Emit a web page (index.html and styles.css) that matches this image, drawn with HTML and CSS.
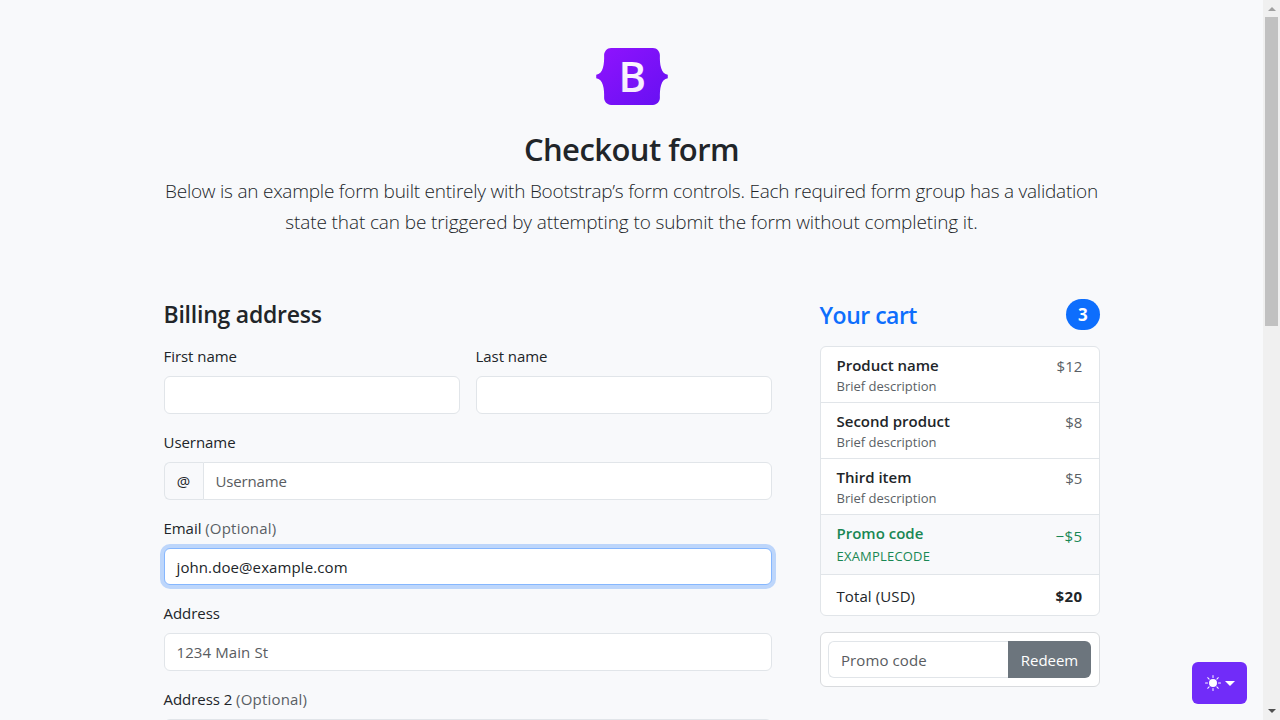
FILE: index.html
```html
<!DOCTYPE html>
<html lang="en">
<head>
<meta charset="utf-8">
<title>Checkout form</title>
<link rel="stylesheet" href="styles.css">
</head>
<body>
<div class="viewport">
  <div class="page">
    <div class="container">
      <header class="intro">
        <svg class="logo" viewBox="0 0 118 94" width="72" height="57">
          <defs>
            <linearGradient id="brand" x1="0" y1="0" x2="1" y2="1">
              <stop offset="0" stop-color="#9013fe"/>
              <stop offset="1" stop-color="#6610f2"/>
            </linearGradient>
            <linearGradient id="letter" x1="0" y1="0" x2="0" y2="1">
              <stop offset="0" stop-color="#fff"/>
              <stop offset="1" stop-color="#f1e5fc"/>
            </linearGradient>
          </defs>
          <path fill="url(#brand)" d="M24.509 0c-6.733 0-11.715 5.893-11.492 12.284.214 6.14-.064 14.092-2.066 20.577C8.943 39.365 5.547 43.485 0 44.014v5.972c5.547.529 8.943 4.649 10.951 11.153 2.002 6.485 2.28 14.437 2.066 20.577C12.794 88.106 17.776 94 24.51 94H93.5c6.733 0 11.714-5.893 11.491-12.284-.214-6.14.064-14.092 2.066-20.577 2.009-6.504 5.396-10.624 10.943-11.153v-5.972c-5.547-.529-8.934-4.649-10.943-11.153-2.002-6.484-2.28-14.437-2.066-20.577C105.214 5.894 100.233 0 93.5 0H24.508z"/>
          <text class="logo-letter" x="59.5" y="72" text-anchor="middle" fill="url(#letter)">B</text>
        </svg>
        <h1 class="title">Checkout form</h1>
        <p class="lead"><span class="lead-a">Below is an example form built entirely with Bootstrap’s form controls. Each required form group has a validation</span><br><span class="lead-b">state that can be triggered by attempting to submit the form without completing it.</span></p>
      </header>

      <main class="columns">
        <form class="billing">
          <h4 class="heading">Billing address</h4>
          <div class="fields">
            <div class="pair">
              <div class="field"><label class="label">First name</label><div class="control"></div></div>
              <div class="field"><label class="label">Last name</label><div class="control"></div></div>
            </div>
            <div class="field">
              <label class="label">Username</label>
              <div class="group"><span class="addon">@</span><div class="control control-end placeholder username">Username</div></div>
            </div>
            <div class="field">
              <label class="label">Email <span class="muted">(Optional)</span></label>
              <div class="control focused">john.doe@example.com</div>
            </div>
            <div class="field">
              <label class="label">Address</label>
              <div class="control placeholder">1234 Main St</div>
            </div>
            <div class="field">
              <label class="label">Address 2 <span class="muted">(Optional)</span></label>
              <div class="control"></div>
            </div>
          </div>
        </form>

        <aside class="cart">
          <h4 class="cart-head"><span>Your cart</span><span class="badge">3</span></h4>
          <ul class="list">
            <li class="item"><div><h6 class="name">Product name</h6><small class="desc">Brief description</small></div><span class="price">$12</span></li>
            <li class="item"><div><h6 class="name">Second product</h6><small class="desc">Brief description</small></div><span class="price">$8</span></li>
            <li class="item"><div><h6 class="name">Third item</h6><small class="desc">Brief description</small></div><span class="price">$5</span></li>
            <li class="item promo"><div><h6 class="name">Promo code</h6><small class="desc code">EXAMPLECODE</small></div><span class="price">−$5</span></li>
            <li class="item total"><span>Total (USD)</span><strong class="sum">$20</strong></li>
          </ul>
          <div class="card">
            <div class="group"><div class="control control-start placeholder">Promo code</div><button class="redeem" type="button">Redeem</button></div>
          </div>
        </aside>
      </main>
    </div>
  </div>
  <div class="scrollbar">
    <span class="arrow up"></span>
    <span class="thumb"></span>
    <span class="arrow down"></span>
  </div>
</div>
<button class="theme" type="button">
  <svg width="16" height="16" viewBox="0 0 16 16" fill="#fff"><path d="M8 12a4 4 0 1 0 0-8 4 4 0 0 0 0 8zM8 0a.5.5 0 0 1 .5.5v2a.5.5 0 0 1-1 0v-2A.5.5 0 0 1 8 0zm0 13a.5.5 0 0 1 .5.5v2a.5.5 0 0 1-1 0v-2A.5.5 0 0 1 8 13zm8-5a.5.5 0 0 1-.5.5h-2a.5.5 0 0 1 0-1h2a.5.5 0 0 1 .5.5zM3 8a.5.5 0 0 1-.5.5h-2a.5.5 0 0 1 0-1h2A.5.5 0 0 1 3 8zm10.657-5.657a.5.5 0 0 1 0 .707l-1.414 1.415a.5.5 0 1 1-.707-.708l1.414-1.414a.5.5 0 0 1 .707 0zm-9.193 9.193a.5.5 0 0 1 0 .707L3.05 13.657a.5.5 0 0 1-.707-.707l1.414-1.414a.5.5 0 0 1 .707 0zm9.193 2.121a.5.5 0 0 1-.707 0l-1.414-1.414a.5.5 0 0 1 .707-.707l1.414 1.414a.5.5 0 0 1 0 .707zM4.464 4.465a.5.5 0 0 1-.707 0L2.343 3.05a.5.5 0 1 1 .707-.707l1.414 1.414a.5.5 0 0 1 0 .708z"/></svg>
  <span class="caret"></span>
</button>
</body>
</html>
```

FILE: styles.css
```css
* { box-sizing: border-box; }
body {
  margin: 0;
  height: 720px;
  overflow: hidden;
  background: #f8f9fb;
  color: #212529;
  font-family: "Open Sans", "Noto Sans", sans-serif;
  font-size: 15px;
  line-height: 24px;
  letter-spacing: 0.1px;
}
h1, h4, h6, p, ul { margin: 0; padding: 0; }
.viewport { display: flex; height: 720px; }
.page { flex: 1; height: 720px; overflow: hidden; background: #f8f9fb; }
.container { width: 960px; margin: 0 auto; padding: 0 12px; }

.intro { padding-top: 48px; height: 299.4px; text-align: center; }
.logo { display: block; margin: 0 auto 25px; }
.logo-letter { font-family: "Open Sans", sans-serif; font-size: 69px; font-weight: 600; letter-spacing: 0; }
.title { font-size: 31px; line-height: 38px; font-weight: 600; letter-spacing: -0.55px; }
.lead { margin: 8px -12px 0; font-size: 19px; line-height: 31px; font-weight: 300; white-space: nowrap; }
.lead-a { letter-spacing: -0.235px; }
.lead-b { letter-spacing: -0.12px; }

.columns { display: flex; gap: 48px; }
.billing { width: 608px; }
.heading { font-size: 23px; line-height: 29px; font-weight: 600; padding-top: 1px; margin-bottom: 15px; letter-spacing: -0.23px; }
.fields { display: flex; flex-direction: column; gap: 16px; }
.pair { display: grid; grid-template-columns: 1fr 1fr; gap: 16px; }
.label { display: block; height: 24px; margin-bottom: 8px; letter-spacing: -0.05px; }
.muted { color: #5a5f65; letter-spacing: 0.2px; }
.control {
  height: 37.6px;
  padding: 6px 12px;
  border: 1px solid #e1e5e9;
  border-radius: 6px;
  background: #fff;
  white-space: nowrap;
}
.placeholder { color: #595c5f; }
.username { letter-spacing: -0.15px; }
.focused { border-color: #86b7fe; box-shadow: 0 0 0 4px #bdd6fb; }
.group { display: flex; }
.addon {
  width: 39px;
  height: 37.6px;
  padding: 6px 0;
  text-align: center;
  border: 1px solid #e1e5e9;
  border-right: 0;
  border-radius: 6px 0 0 6px;
}
.control-end { flex: 1; border-radius: 0 6px 6px 0; }
.control-start { flex: 1; border-radius: 6px 0 0 6px; border-right: 0; }

.cart { width: 280px; }
.cart-head {
  display: flex;
  justify-content: space-between;
  align-items: center;
  height: 31px;
  margin-bottom: 16px;
  color: #0d6efd;
  font-size: 23px;
  font-weight: 600;
  letter-spacing: -0.5px;
}
.badge {
  width: 34px;
  height: 31px;
  border-radius: 16px;
  background: #0d6efd;
  color: #fff;
  font-size: 17px;
  line-height: 32px;
  font-weight: 700;
  text-align: center;
}
.list { list-style: none; border: 1px solid #e1e5e9; border-radius: 6px; background: #fff; overflow: hidden; margin-bottom: 16px; }
.item { display: flex; justify-content: space-between; height: 56px; padding: 7px 16px; border-bottom: 1px solid #e1e5e9; }
.name { padding-top: 1px; font-size: 15px; line-height: 20px; font-weight: 600; letter-spacing: 0; }
.desc { display: block; padding-top: 1px; font-size: 13px; line-height: 21px; color: #5a5f65; letter-spacing: 0; }
.price { color: #5a5f65; }
.promo { height: 60px; background: #f8f9fb; color: #198754; }
.promo .price { color: #198754; padding-top: 2px; letter-spacing: 0.4px; }
.code { color: #198754; padding-top: 3px; letter-spacing: 0.2px; }
.total { height: 40px; padding: 9px 16px; border: 0; }
.sum { font-weight: 700; letter-spacing: 0.4px; }
.card { padding: 7.5px; border: 1px solid #d9dbde; border-radius: 6px; background: #fff; }
.redeem {
  width: 83px;
  height: 37.6px;
  padding: 0;
  border: 0;
  border-radius: 0 6px 6px 0;
  background: #6c757d;
  color: #fff;
  font: inherit;
  letter-spacing: -0.05px;
}

.scrollbar { width: 17px; height: 720px; padding: 7px 2px; background: #f0f0f0; display: flex; flex-direction: column; align-items: center; }
.arrow { border: 4px solid transparent; border-top-width: 0; border-bottom-width: 0; }
.up { border-bottom: 4px solid #a0a0a0; }
.down { border-top: 4px solid #505050; margin-top: auto; }
.thumb { width: 13px; height: 309px; margin-top: 6px; background: #c1c1c1; }

.theme {
  position: fixed;
  right: 33px;
  bottom: 16px;
  width: 55px;
  height: 42px;
  padding: 0;
  display: flex;
  align-items: center;
  justify-content: center;
  gap: 4px;
  border: 0;
  border-radius: 6px;
  background: #712cf9;
}
.caret { border: 5px solid transparent; border-top-color: #fff; border-bottom: 0; }
```
